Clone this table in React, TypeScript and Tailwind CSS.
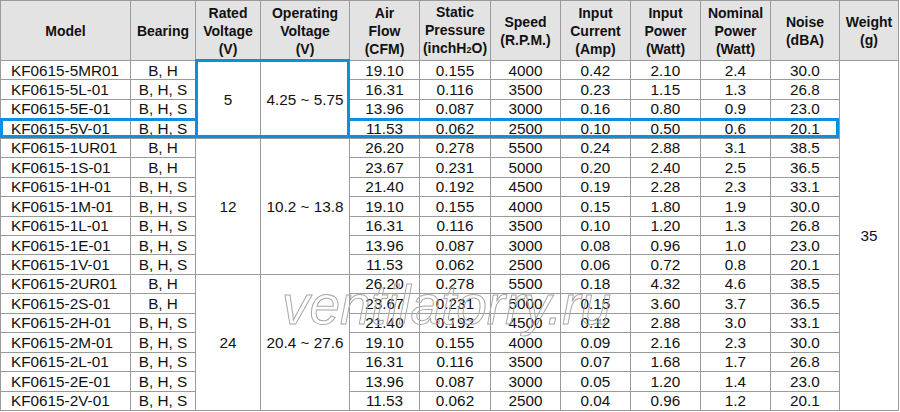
import React from "react";

type Row = {
  model: string;
  bearing: string;
  air: string;
  pressure: string;
  speed: string;
  current: string;
  power: string;
  nominal: string;
  noise: string;
};

const rows: Row[] = [
  { model: "KF0615-5MR01", bearing: "B, H", air: "19.10", pressure: "0.155", speed: "4000", current: "0.42", power: "2.10", nominal: "2.4", noise: "30.0" },
  { model: "KF0615-5L-01", bearing: "B, H, S", air: "16.31", pressure: "0.116", speed: "3500", current: "0.23", power: "1.15", nominal: "1.3", noise: "26.8" },
  { model: "KF0615-5E-01", bearing: "B, H, S", air: "13.96", pressure: "0.087", speed: "3000", current: "0.16", power: "0.80", nominal: "0.9", noise: "23.0" },
  { model: "KF0615-5V-01", bearing: "B, H, S", air: "11.53", pressure: "0.062", speed: "2500", current: "0.10", power: "0.50", nominal: "0.6", noise: "20.1" },
  { model: "KF0615-1UR01", bearing: "B, H", air: "26.20", pressure: "0.278", speed: "5500", current: "0.24", power: "2.88", nominal: "3.1", noise: "38.5" },
  { model: "KF0615-1S-01", bearing: "B, H", air: "23.67", pressure: "0.231", speed: "5000", current: "0.20", power: "2.40", nominal: "2.5", noise: "36.5" },
  { model: "KF0615-1H-01", bearing: "B, H, S", air: "21.40", pressure: "0.192", speed: "4500", current: "0.19", power: "2.28", nominal: "2.3", noise: "33.1" },
  { model: "KF0615-1M-01", bearing: "B, H, S", air: "19.10", pressure: "0.155", speed: "4000", current: "0.15", power: "1.80", nominal: "1.9", noise: "30.0" },
  { model: "KF0615-1L-01", bearing: "B, H, S", air: "16.31", pressure: "0.116", speed: "3500", current: "0.10", power: "1.20", nominal: "1.3", noise: "26.8" },
  { model: "KF0615-1E-01", bearing: "B, H, S", air: "13.96", pressure: "0.087", speed: "3000", current: "0.08", power: "0.96", nominal: "1.0", noise: "23.0" },
  { model: "KF0615-1V-01", bearing: "B, H, S", air: "11.53", pressure: "0.062", speed: "2500", current: "0.06", power: "0.72", nominal: "0.8", noise: "20.1" },
  { model: "KF0615-2UR01", bearing: "B, H", air: "26.20", pressure: "0.278", speed: "5500", current: "0.18", power: "4.32", nominal: "4.6", noise: "38.5" },
  { model: "KF0615-2S-01", bearing: "B, H", air: "23.67", pressure: "0.231", speed: "5000", current: "0.15", power: "3.60", nominal: "3.7", noise: "36.5" },
  { model: "KF0615-2H-01", bearing: "B, H, S", air: "21.40", pressure: "0.192", speed: "4500", current: "0.12", power: "2.88", nominal: "3.0", noise: "33.1" },
  { model: "KF0615-2M-01", bearing: "B, H, S", air: "19.10", pressure: "0.155", speed: "4000", current: "0.09", power: "2.16", nominal: "2.3", noise: "30.0" },
  { model: "KF0615-2L-01", bearing: "B, H, S", air: "16.31", pressure: "0.116", speed: "3500", current: "0.07", power: "1.68", nominal: "1.7", noise: "26.8" },
  { model: "KF0615-2E-01", bearing: "B, H, S", air: "13.96", pressure: "0.087", speed: "3000", current: "0.05", power: "1.20", nominal: "1.4", noise: "23.0" },
  { model: "KF0615-2V-01", bearing: "B, H, S", air: "11.53", pressure: "0.062", speed: "2500", current: "0.04", power: "0.96", nominal: "1.2", noise: "20.1" },
];

// groups of rows sharing one rated / operating voltage cell
const groups: Record<number, { rated: string; op: string; span: string }> = {
  0: { rated: "5", op: "4.25 ~ 5.75", span: "row-span-4" },
  4: { rated: "12", op: "10.2 ~ 13.8", span: "row-span-7" },
  11: { rated: "24", op: "20.4 ~ 27.6", span: "row-span-7" },
};

const headers: React.ReactNode[] = [
  "Model",
  "Bearing",
  <>Rated<br />Voltage<br />(V)</>,
  <>Operating<br />Voltage<br />(V)</>,
  <>Air<br />Flow<br />(CFM)</>,
  <>Static<br />Pressure<br />(inchH<span className="text-[9px]">2</span>O)</>,
  <>Speed<br />(R.P.M.)</>,
  <>Input<br />Current<br />(Amp)</>,
  <>Input<br />Power<br />(Watt)</>,
  <>Nominal<br />Power<br />(Watt)</>,
  <>Noise<br />(dBA)</>,
  <>Weight<br />(g)</>,
];

const cell = "bg-white flex items-center justify-center";

export default function App() {
  return (
    <div className="w-[900px] h-[412px] bg-white relative overflow-hidden font-[Arial,Helvetica,sans-serif] text-[#111]">
      <div className="grid w-[899px] h-[411px] p-px gap-px bg-[#9a9a9a] grid-cols-[129px_64px_64px_88px_69px_70px_69px_69px_69px_69px_68px_58px] grid-rows-[59px_repeat(18,minmax(0,1fr))] text-[15.3px] leading-none">
        {headers.map((h, i) => (
          <div
            key={i}
            className="bg-[#e3e3e3] flex items-center justify-center text-center font-bold text-[14px] leading-[18px]"
          >
            <div>{h}</div>
          </div>
        ))}

        {rows.map((r, i) => (
          <React.Fragment key={r.model}>
            <div className="bg-white flex items-center pl-[10px]">{r.model}</div>
            <div className={cell}>{r.bearing}</div>
            {groups[i] && (
              <>
                <div className={`${cell} ${groups[i].span}`}>{groups[i].rated}</div>
                <div className={`${cell} ${groups[i].span}`}>{groups[i].op}</div>
              </>
            )}
            <div className={cell}>{r.air}</div>
            <div className={cell}>{r.pressure}</div>
            <div className={cell}>{r.speed}</div>
            <div className={cell}>{r.current}</div>
            <div className={cell}>{r.power}</div>
            <div className={cell}>{r.nominal}</div>
            <div className={cell}>{r.noise}</div>
            {i === 0 && <div className={`${cell} row-span-18`}>35</div>}
          </React.Fragment>
        ))}
      </div>

      {/* blue highlight outlines */}
      <div className="absolute left-[195px] top-[59px] w-[155px] h-[79px] border-[3px] border-[#0b8fe2] pointer-events-none" />
      <div className="absolute left-0 top-[118px] w-[198px] h-[20px] border-[3px] border-r-0 border-[#0b8fe2] pointer-events-none" />
      <div className="absolute left-[347px] top-[118px] w-[492px] h-[20px] border-[3px] border-l-0 border-[#0b8fe2] pointer-events-none" />

      {/* watermark */}
      <div className="absolute left-[282px] top-[278px] text-[55px] leading-[55px] italic text-transparent [-webkit-text-stroke:1px_#a8a8a8] pointer-events-none select-none">
        ventilatorry.ru
      </div>
    </div>
  );
}
